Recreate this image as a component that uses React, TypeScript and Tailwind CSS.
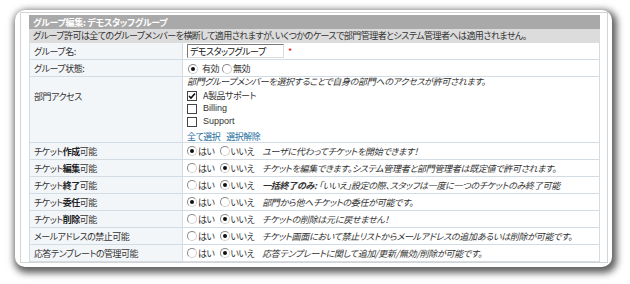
import React from 'react';

const jp = "font-['Noto_Sans_CJK_JP','Liberation_Sans',sans-serif] [font-feature-settings:'palt']";

const Radio = ({ on }: { on?: boolean }) => (
  <span className="inline-flex shrink-0 w-[10px] h-[10px] rounded-full border border-[#8a8a8a] border-r-[#d0d0d0] border-b-[#d0d0d0] bg-white items-center justify-center mr-[1px]">
    {on && <span className="w-[4px] h-[4px] rounded-full bg-[#111]" />}
  </span>
);

const Check = ({ on }: { on?: boolean }) => (
  <span className="inline-flex shrink-0 w-[10px] h-[10px] border border-[#444] bg-white items-center justify-center mr-[6px]">
    {on && (
      <svg width="8" height="8" viewBox="0 0 8 8">
        <path d="M1 4 L3 6 L7 1.5" fill="none" stroke="#111" strokeWidth="1.6" />
      </svg>
    )}
  </span>
);

const YesNo = ({ yes }: { yes: boolean }) => (
  <span className="inline-flex items-center shrink-0">
    <Radio on={yes} />
    <span className="mr-[5px]">はい</span>
    <Radio on={!yes} />
    <span className="mr-[8px]">いいえ</span>
  </span>
);

const perms: { pre: string; bold?: string; post: string; yes: boolean; note: React.ReactNode }[] = [
  { pre: 'チケット', bold: '作成', post: '可能', yes: true, note: 'ユーザに代わってチケットを開始できます！' },
  { pre: 'チケット', bold: '編集', post: '可能', yes: false, note: 'チケットを編集できます。システム管理者と部門管理者は既定値で許可されます。' },
  {
    pre: 'チケット', bold: '終了', post: '可能', yes: false,
    note: (
      <>
        <b>一括終了のみ:</b> 「いいえ」設定の際、スタッフは一度に一つのチケットのみ終了可能
      </>
    ),
  },
  { pre: 'チケット', bold: '委任', post: '可能', yes: true, note: '部門から他へチケットの委任が可能です。' },
  { pre: 'チケット', bold: '削除', post: '可能', yes: false, note: 'チケットの削除は元に戻せません！' },
  { pre: 'メールアドレスの禁止可能', post: '', yes: false, note: 'チケット画面において禁止リストからメールアドレスの追加あるいは削除が可能です。' },
  { pre: '応答テンプレートの管理可能', post: '', yes: false, note: '応答テンプレートに関して追加/更新/無効/削除が可能です。' },
];

const labelCls = 'w-[153px] border border-[#d3dbe3] bg-[#f3f6f9] pl-[4px] align-middle whitespace-nowrap';
const valueCls = 'border border-[#d3dbe3] bg-white pl-[4px] align-middle whitespace-nowrap overflow-hidden';

export default function App() {
  return (
    <div className={`w-[630px] h-[284px] bg-white pt-[10px] pl-[15px] text-[9px] leading-[11px] tracking-[-0.5px] text-[#333] ${jp}`}>
      <div className="w-[597px] h-[257px] bg-white rounded-[10px] shadow-[2px_3px_7px_3px_rgba(0,0,0,0.62)] pt-[2px] pl-[5px]">
        <div className="w-[588px] h-[251px] border border-[#d4d4d4] pt-[2px] pl-[8px]">
          <table className="w-[571px] border-collapse table-fixed">
            <colgroup>
              <col className="w-[153px]" />
              <col />
            </colgroup>
            <tbody>
              <tr className="h-[13px]">
                <td colSpan={2} className="bg-[#a9a9a9] text-white font-bold pl-[3px] border border-[#a9a9a9] whitespace-nowrap tracking-[-0.3px]">
                  グループ編集: デモスタッフグループ
                </td>
              </tr>
              <tr className="h-[14px]">
                <td colSpan={2} className="bg-[#dcdcdc] pl-[3px] border border-[#dcdcdc] whitespace-nowrap tracking-[-0.55px]">
                  グループ許可は全てのグループメンバーを横断して適用されますが、いくつかのケースで部門管理者とシステム管理者へは適用されません。
                </td>
              </tr>
              <tr className="h-[17px]">
                <td className={labelCls}>グループ名:</td>
                <td className={valueCls}>
                  <div className="flex items-center">
                    <span className="w-[97px] h-[14px] border border-[#7a7a7a] border-r-[#dcdcdc] border-b-[#dcdcdc] bg-white pl-[2px] text-[#111] flex items-center">
                      デモスタッフグループ
                    </span>
                    <span className="text-[#e00] ml-[4px]">*</span>
                  </div>
                </td>
              </tr>
              <tr className="h-[17px]">
                <td className={labelCls}>グループ状態:</td>
                <td className={`${valueCls} pl-[5px]`}>
                  <span className="inline-flex items-center">
                    <Radio on />
                    <span className="ml-[3px] mr-[3px]">有効</span>
                    <Radio />
                    <span>無効</span>
                  </span>
                </td>
              </tr>
              <tr className="h-[66px]">
                <td className={`${labelCls} !align-top pt-[14px]`}>部門アクセス</td>
                <td className={`${valueCls} !align-top pt-0`}>
                  <div className="italic h-[12px] -mt-[1px] tracking-[-0.3px]">部門グループメンバーを選択することで自身の部門へのアクセスが許可されます。</div>
                  <div className="flex items-center h-[13px] mt-[1px]"><Check on />A製品サポート</div>
                  <div className="flex items-center h-[13px] font-['Liberation_Sans',sans-serif] tracking-normal"><Check />Billing</div>
                  <div className="flex items-center h-[13px] font-['Liberation_Sans',sans-serif] tracking-normal"><Check />Support</div>
                  <div className="text-[#1b6d9e] mt-[3px]">
                    全て選択<span className="ml-[6px]">選択解除</span>
                  </div>
                </td>
              </tr>
              {perms.map((p, i) => (
                <tr key={i} className="h-[17px]">
                  <td className={labelCls}>
                    {p.pre}
                    {p.bold && <b className="text-[#222]">{p.bold}</b>}
                    {p.post}
                  </td>
                  <td className={valueCls}>
                    <div className="flex items-center">
                      <YesNo yes={p.yes} />
                      <span className="italic text-[#333] tracking-[-0.3px]">{p.note}</span>
                    </div>
                  </td>
                </tr>
              ))}
            </tbody>
          </table>
        </div>
      </div>
    </div>
  );
}
